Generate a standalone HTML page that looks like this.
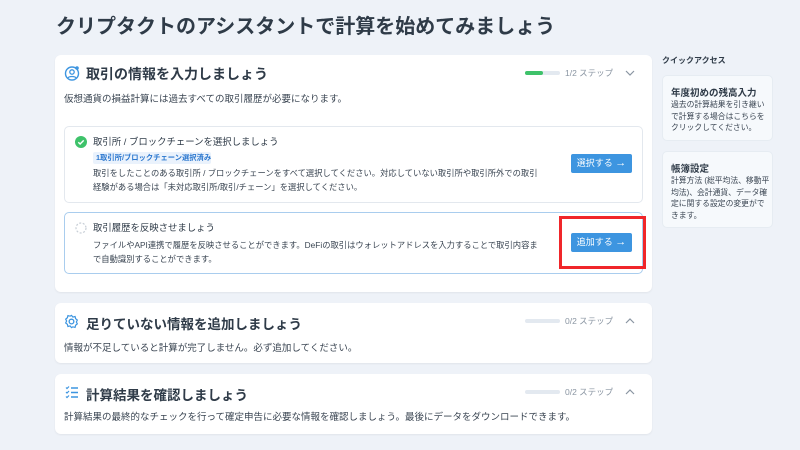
<!DOCTYPE html>
<html><head><meta charset="utf-8"><style>
*{box-sizing:border-box;margin:0;padding:0}
body{width:800px;height:450px;overflow:hidden;background:#eef2f8;font-family:"Liberation Sans","Noto Sans CJK JP",sans-serif;color:#2f3b48;position:relative}
.a{position:absolute}
.card{position:absolute;background:#fff;border-radius:6px;box-shadow:0 1px 2px rgba(0,0,0,.06)}
.h{position:absolute;font-size:14px;font-weight:bold;color:#2f3b48;white-space:nowrap}
.t{position:absolute;font-size:9.5px;color:#3a4552;white-space:nowrap;line-height:14px}
.s{font-size:8.3px}
.sub{position:absolute;background:#fff;border:1px solid #e3e8ee;border-radius:5px}
.btn{position:absolute;background:#3d95e0;color:#fff;font-size:9px;border-radius:2px;width:61px;height:19px;line-height:19px;text-align:center}
.btn b{font-weight:normal;font-size:11px}
.bar{position:absolute;width:35px;height:4px;border-radius:2px;background:#e3e9f0}
.st{position:absolute;font-size:8.5px;color:#8a95a2;white-space:nowrap}
.side{position:absolute;background:#f6f9fc;border:1px solid #e6ecf2;border-radius:5px;left:662px;width:111px}
</style></head><body>
<div class="a" style="left:56px;top:10px;font-size:20px;font-weight:bold;color:#2f3b48;white-space:nowrap">クリプタクトのアシスタントで計算を始めてみましょう</div>

<div class="card" style="left:55px;top:55px;width:597px;height:237px"></div>
<svg class="a" style="left:64px;top:65px" width="16" height="16" viewBox="0 0 16 16"><circle cx="8" cy="8.5" r="6.5" fill="none" stroke="#3d95e0" stroke-width="1.4"/><circle cx="8" cy="7" r="2.2" fill="none" stroke="#3d95e0" stroke-width="1.3"/><path d="M4 13c1-2 7-2 8 0" fill="none" stroke="#3d95e0" stroke-width="1.3"/><circle cx="13" cy="3" r="1.8" fill="#3d95e0"/></svg>
<div class="h" style="left:86px;top:64px">取引の情報を入力しましょう</div>
<div class="bar" style="left:525px;top:71px"></div><div class="a" style="left:525px;top:71px;width:18px;height:4px;border-radius:2px;background:#3ec26a"></div>
<div class="st" style="left:565px;top:67px">1/2 ステップ</div>
<svg class="a" style="left:625px;top:69px" width="10" height="8"><path d="M1 2l4 4 4-4" fill="none" stroke="#8a95a2" stroke-width="1.2"/></svg>
<div class="t" style="left:64px;top:93px">仮想通貨の損益計算には過去すべての取引履歴が必要になります。</div>

<div class="sub" style="left:64px;top:126px;width:579px;height:77px"></div>
<svg class="a" style="left:75px;top:136px" width="12" height="12"><circle cx="6" cy="6" r="6" fill="#3ec26a"/><path d="M3.3 6.2l1.8 1.8 3.6-3.6" fill="none" stroke="#fff" stroke-width="1.4"/></svg>
<div class="t" style="left:93px;top:135px;font-size:9.4px;color:#2f3b48">取引所 / ブロックチェーンを選択しましょう</div>
<div class="a" style="left:93px;top:152px;width:118px;height:12px;background:#eaf2fc;border-radius:2px;color:#2c78cf;font-size:7.3px;font-weight:bold;line-height:12px;padding-left:3px;white-space:nowrap">1取引所/ブロックチェーン選択済み</div>
<div class="t s" style="left:93px;top:166px">取引をしたことのある取引所 / ブロックチェーンをすべて選択してください。対応していない取引所や取引所外での取引<br>経験がある場合は「未対応取引所/取引/チェーン」を選択してください。</div>
<div class="btn" style="left:571px;top:154px">選択する <b>→</b></div>

<div class="sub" style="left:64px;top:212px;width:579px;height:62px;border-color:#a9cdee"></div>
<svg class="a" style="left:75px;top:222px" width="12" height="12"><circle cx="6" cy="6" r="5" fill="none" stroke="#c7ced6" stroke-width="1.2" stroke-dasharray="2 1.6"/></svg>
<div class="t" style="left:93px;top:221px;font-size:9.4px;color:#2f3b48">取引履歴を反映させましょう</div>
<div class="t s" style="left:93px;top:238px">ファイルやAPI連携で履歴を反映させることができます。DeFiの取引はウォレットアドレスを入力することで取引内容ま<br>で自動識別することができます。</div>
<div class="btn" style="left:571px;top:233px">追加する <b>→</b></div>
<div class="a" style="left:559px;top:216px;width:87px;height:53px;border:3px solid #f0262a"></div>

<div class="card" style="left:55px;top:303px;width:597px;height:60px"></div>
<svg class="a" style="left:64px;top:314px" width="15" height="15" viewBox="0 0 16 16"><circle cx="8" cy="8" r="2.5" fill="none" stroke="#3d95e0" stroke-width="1.4"/><path d="M8 1.5l1.5 1.8 2.3-.6.6 2.3 1.8 1.5-1 2 1 2-1.8 1.5-.6 2.3-2.3-.6L8 14.5l-1.5-1.8-2.3.6-.6-2.3L1.8 9.5l1-2-1-2 1.8-1.5.6-2.3 2.3.6z" fill="none" stroke="#3d95e0" stroke-width="1.3"/></svg>
<div class="h" style="left:86px;top:313px;font-size:13.5px">足りていない情報を追加しましょう</div>
<div class="bar" style="left:525px;top:319px"></div>
<div class="st" style="left:565px;top:315px">0/2 ステップ</div>
<svg class="a" style="left:625px;top:317px" width="10" height="8"><path d="M1 6l4-4 4 4" fill="none" stroke="#8a95a2" stroke-width="1.2"/></svg>
<div class="t" style="left:64px;top:342px">情報が不足していると計算が完了しません。必ず追加してください。</div>

<div class="card" style="left:55px;top:374px;width:597px;height:60px"></div>
<svg class="a" style="left:65px;top:385px" width="14" height="14"><path d="M1 2.5l1 1 2-2M1 7l1 1 2-2M1 11.5l1 1 2-2" fill="none" stroke="#3d95e0" stroke-width="1.2"/><path d="M6 3h7M6 7.5h7M6 12h7" stroke="#3d95e0" stroke-width="1.4"/></svg>
<div class="h" style="left:86px;top:384px;font-size:13.5px">計算結果を確認しましょう</div>
<div class="bar" style="left:525px;top:390px"></div>
<div class="st" style="left:565px;top:386px">0/2 ステップ</div>
<svg class="a" style="left:625px;top:388px" width="10" height="8"><path d="M1 6l4-4 4 4" fill="none" stroke="#8a95a2" stroke-width="1.2"/></svg>
<div class="t" style="left:64px;top:411px">計算結果の最終的なチェックを行って確定申告に必要な情報を確認しましょう。最後にデータをダウンロードできます。</div>

<div class="a" style="left:662px;top:55px;font-size:8px;font-weight:bold;color:#2f3b48">クイックアクセス</div>
<div class="side" style="top:75px;height:66px"></div>
<div class="a" style="left:671px;top:85px;font-size:9.5px;font-weight:bold;color:#2f3b48">年度初めの残高入力</div>
<div class="a" style="left:671px;top:99px;font-size:7.8px;line-height:11.5px;color:#3a4552">過去の計算結果を引き継い<br>で計算する場合はこちらを<br>クリックしてください。</div>
<div class="side" style="top:151px;height:77px"></div>
<div class="a" style="left:671px;top:161px;font-size:9.5px;font-weight:bold;color:#2f3b48">帳簿設定</div>
<div class="a" style="left:671px;top:175px;font-size:7.8px;line-height:11.5px;color:#3a4552">計算方法 (総平均法、移動平<br>均法)、会計通貨、データ確<br>定に関する設定の変更がで<br>きます。</div>
</body></html>
